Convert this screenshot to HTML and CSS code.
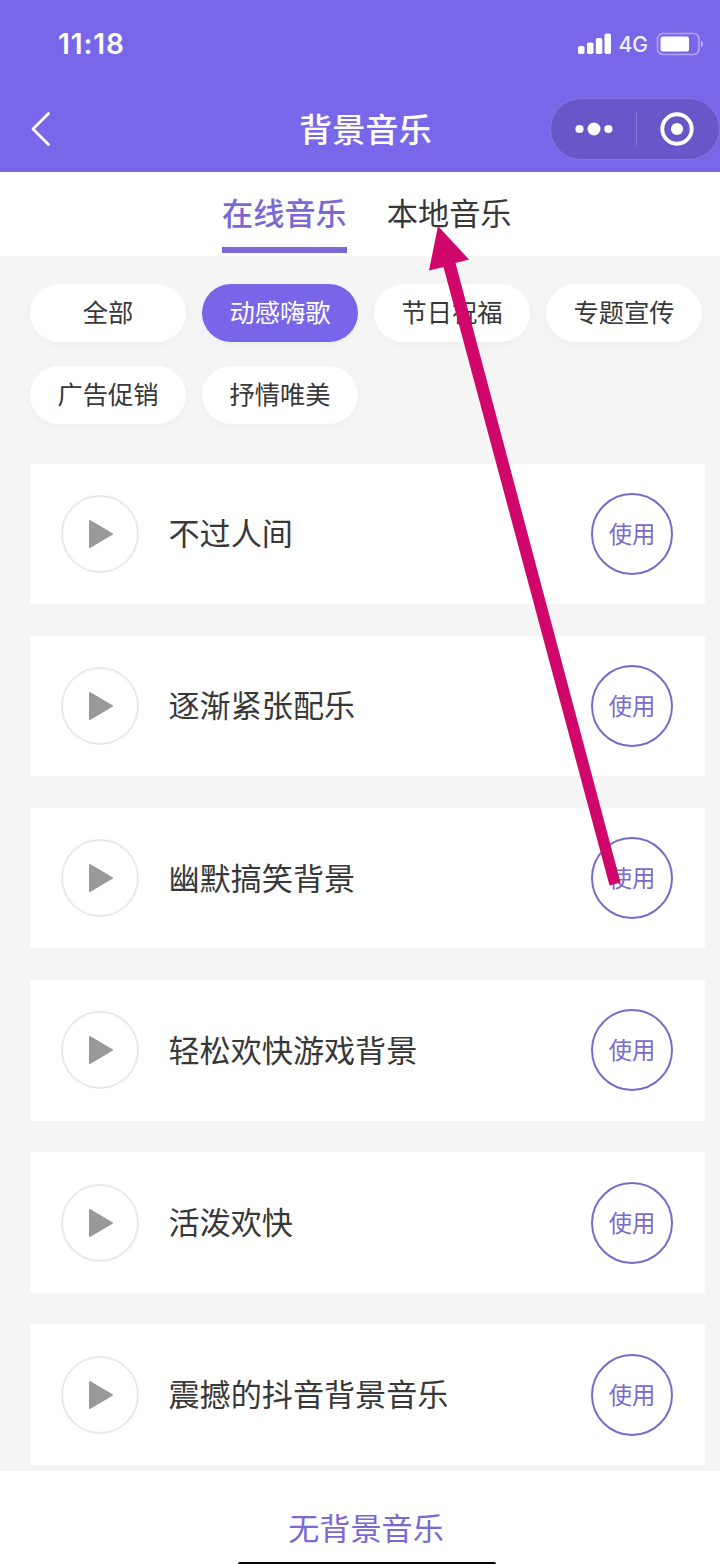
FILE: index.html
```html
<!DOCTYPE html>
<html lang="zh-CN">
<head>
    <meta charset="UTF-8">
    <meta name="viewport" content="width=device-width, initial-scale=1.0">
    <title>背景音乐</title>
    <link rel="stylesheet" href="styles.css">
</head>
<body>
    <div class="page">
        <header class="header">
            <div class="status-bar">
                <span class="time">11:18</span>
                <div class="status-icons">
                    <svg class="signal" width="35" height="22" viewBox="0 0 35 22" fill="#fff">
                        <rect x="1" y="13" width="6.5" height="8" rx="1.8"/>
                        <rect x="10" y="9.5" width="6.5" height="11.5" rx="1.8"/>
                        <rect x="18.8" y="5" width="6.5" height="16" rx="1.8"/>
                        <rect x="27.5" y="0.5" width="6.5" height="20.5" rx="1.8"/>
                    </svg>
                    <span class="network">4G</span>
                    <svg class="battery" width="48" height="24" viewBox="0 0 48 24">
                        <rect x="1.5" y="1.5" width="41.5" height="21" rx="5.5" fill="none" stroke="#fff" stroke-opacity="0.42" stroke-width="1.6"/>
                        <rect x="4.5" y="4.5" width="28.5" height="15" rx="2.5" fill="#fff"/>
                        <path d="M45 8.5c2.8 1.2 2.8 5.8 0 7z" fill="#fff" fill-opacity="0.5"/>
                    </svg>
                </div>
            </div>
            <div class="nav-bar">
                <svg class="back" width="22" height="36" viewBox="0 0 22 36">
                    <path d="M18.5 2.500 3 18l15.500 15.500" fill="none" stroke="#fff" stroke-width="2.800" stroke-linecap="round" stroke-linejoin="round"/>
                </svg>
                <h1 class="title">背景音乐</h1>
                <div class="capsule">
                    <svg class="more" width="38" height="14" viewBox="0 0 38 14" fill="#fff">
                        <circle cx="4.5" cy="7" r="4.1"/>
                        <circle cx="19" cy="7" r="6.5"/>
                        <circle cx="33.4" cy="7" r="4.1"/>
                    </svg>
                    <span class="divider"></span>
                    <svg class="close" width="34" height="34" viewBox="0 0 34 34">
                        <circle cx="17" cy="17" r="14.7" fill="none" stroke="#fff" stroke-width="3.9"/>
                        <circle cx="17" cy="17" r="6.1" fill="#fff"/>
                    </svg>
                </div>
            </div>
        </header>

        <nav class="tabs">
            <div class="tab active">在线音乐</div>
            <div class="tab">本地音乐</div>
        </nav>

        <div class="chips">
            <div class="chip">全部</div>
            <div class="chip active">动感嗨歌</div>
            <div class="chip">节日祝福</div>
            <div class="chip">专题宣传</div>
            <div class="chip">广告促销</div>
            <div class="chip">抒情唯美</div>
        </div>

        <div class="songs">
            <div class="song">
                <div class="play"><svg width="26" height="30" viewBox="0 0 26 30"><path d="M2 2v26L24 15z"/></svg></div>
                <div class="name">不过人间</div>
                <div class="use">使用</div>
            </div>
            <div class="song">
                <div class="play"><svg width="26" height="30" viewBox="0 0 26 30"><path d="M2 2v26L24 15z"/></svg></div>
                <div class="name">逐渐紧张配乐</div>
                <div class="use">使用</div>
            </div>
            <div class="song">
                <div class="play"><svg width="26" height="30" viewBox="0 0 26 30"><path d="M2 2v26L24 15z"/></svg></div>
                <div class="name">幽默搞笑背景</div>
                <div class="use">使用</div>
            </div>
            <div class="song">
                <div class="play"><svg width="26" height="30" viewBox="0 0 26 30"><path d="M2 2v26L24 15z"/></svg></div>
                <div class="name">轻松欢快游戏背景</div>
                <div class="use">使用</div>
            </div>
            <div class="song">
                <div class="play"><svg width="26" height="30" viewBox="0 0 26 30"><path d="M2 2v26L24 15z"/></svg></div>
                <div class="name">活泼欢快</div>
                <div class="use">使用</div>
            </div>
            <div class="song">
                <div class="play"><svg width="26" height="30" viewBox="0 0 26 30"><path d="M2 2v26L24 15z"/></svg></div>
                <div class="name">震撼的抖音背景音乐</div>
                <div class="use">使用</div>
            </div>
        </div>

        <footer class="footer">
            <div class="no-music">无背景音乐</div>
            <div class="home-bar"></div>
        </footer>

        <!-- 箭头：指向本地音乐 -->
        <svg class="arrow" width="720" height="1564" viewBox="0 0 720 1564">
            <path d="M438 226 469 259.5 455.5 263 620.5 882.5 609.5 885.5 443.5 267 429 270.5z" fill="#d1066a"/>
        </svg>
    </div>
</body>
</html>
```

FILE: styles.css
```css
* {
    box-sizing: border-box;
}
body {
    margin: 0;
    font-family: "Noto Sans CJK SC", sans-serif;
    background: #f5f5f5;
    color: #383838;
}
svg {
    display: block;
    flex: none;
}
.page {
    position: relative;
    width: 720px;
    height: 1564px;
    overflow: hidden;
    display: flex;
    flex-direction: column;
}

/* 顶部 */
.header {
    height: 172px;
    flex: none;
    background: #7967ea;
    color: #fff;
}
.status-bar {
    height: 88px;
    padding: 0 16px 0 58px;
    display: flex;
    align-items: center;
    justify-content: space-between;
}
.time {
    font-family: Inter, sans-serif;
    font-size: 28px;
    font-weight: 600;
    letter-spacing: 0.9px;
}
.status-icons {
    display: flex;
    align-items: center;
}
.network {
    font-family: Inter, sans-serif;
    font-size: 21px;
    font-weight: 500;
    margin: 0 8px 0 7px;
    opacity: 0.9;
}
.nav-bar {
    height: 82px;
    padding-left: 30px;
    display: flex;
    align-items: center;
}
.title {
    margin: 0 0 2px 247px;
    font-size: 33.2px;
    line-height: 48px;
    font-weight: 500;
}
.capsule {
    width: 170px;
    height: 62px;
    margin-left: auto;
    padding: 0 25px 0 24px;
    display: flex;
    align-items: center;
    justify-content: space-between;
    background: #6757c8;
    border: 1px solid #8577e0;
    border-radius: 31px;
}
.divider {
    width: 1px;
    height: 36px;
    background: #8478d6;
}

/* 标签 */
.tabs {
    height: 84px;
    flex: none;
    padding-left: 222px;
    display: flex;
    gap: 40px;
    background: #fff;
}
.tab {
    height: 81px;
    font-size: 31.2px;
    line-height: 79px;
}
.tab.active {
    color: #7b68d4;
    font-weight: 500;
    border-bottom: 6px solid #7b68d4;
}

.chips {
    padding: 28px 18px 0 30px;
    display: grid;
    grid-template-columns: repeat(4, 156px);
    grid-auto-rows: 58px;
    gap: 24px 16px;
}
.chip {
    border-radius: 29px;
    background: #fff;
    box-shadow: 0 3px 8px rgba(0,0,0,0.03);
    font-size: 25.3px;
    line-height: 54px;
    text-align: center;
}
.chip.active {
    background: #7865e8;
    color: #fff;
}

/* 音乐列表 */
.songs {
    padding: 39.5px 15.5px 0 30px;
    display: flex;
    flex-direction: column;
    gap: 31.7px;
}
.song {
    height: 140.5px;
    flex: none;
    padding: 0 31.5px 0 31px;
    display: flex;
    align-items: center;
    background: #fff;
}
.play {
    width: 78px;
    height: 78px;
    padding-left: 2px;
    display: flex;
    align-items: center;
    justify-content: center;
    border: 2px solid #e9e9e9;
    border-radius: 50%;
}
.play path {
    fill: #999;
    stroke: #999;
    stroke-width: 2;
    stroke-linejoin: round;
}
.name {
    flex: 1;
    margin: 0 0 3px 29.5px;
    font-size: 31.1px;
    line-height: 46px;
}
.use {
    width: 82px;
    height: 82px;
    border: 2px solid #7b6bc8;
    border-radius: 50%;
    color: #7b6bc8;
    font-size: 23.3px;
    line-height: 76px;
    text-align: center;
}

/* 底部 */
.footer {
    position: absolute;
    left: 0;
    right: 0;
    bottom: 0;
    height: 93px;
    padding-top: 33px;
    display: flex;
    flex-direction: column;
    align-items: center;
    justify-content: space-between;
    background: #fff;
    color: #7b68d4;
}
.no-music {
    margin-left: 12px;
    font-size: 31.1px;
    line-height: 46px;
}
.home-bar {
    width: 258px;
    height: 2px;
    margin-left: 14px;
    border-radius: 2px 2px 0 0;
    background: #000;
}
.arrow {
    position: absolute;
    left: 0;
    top: 0;
}
```
